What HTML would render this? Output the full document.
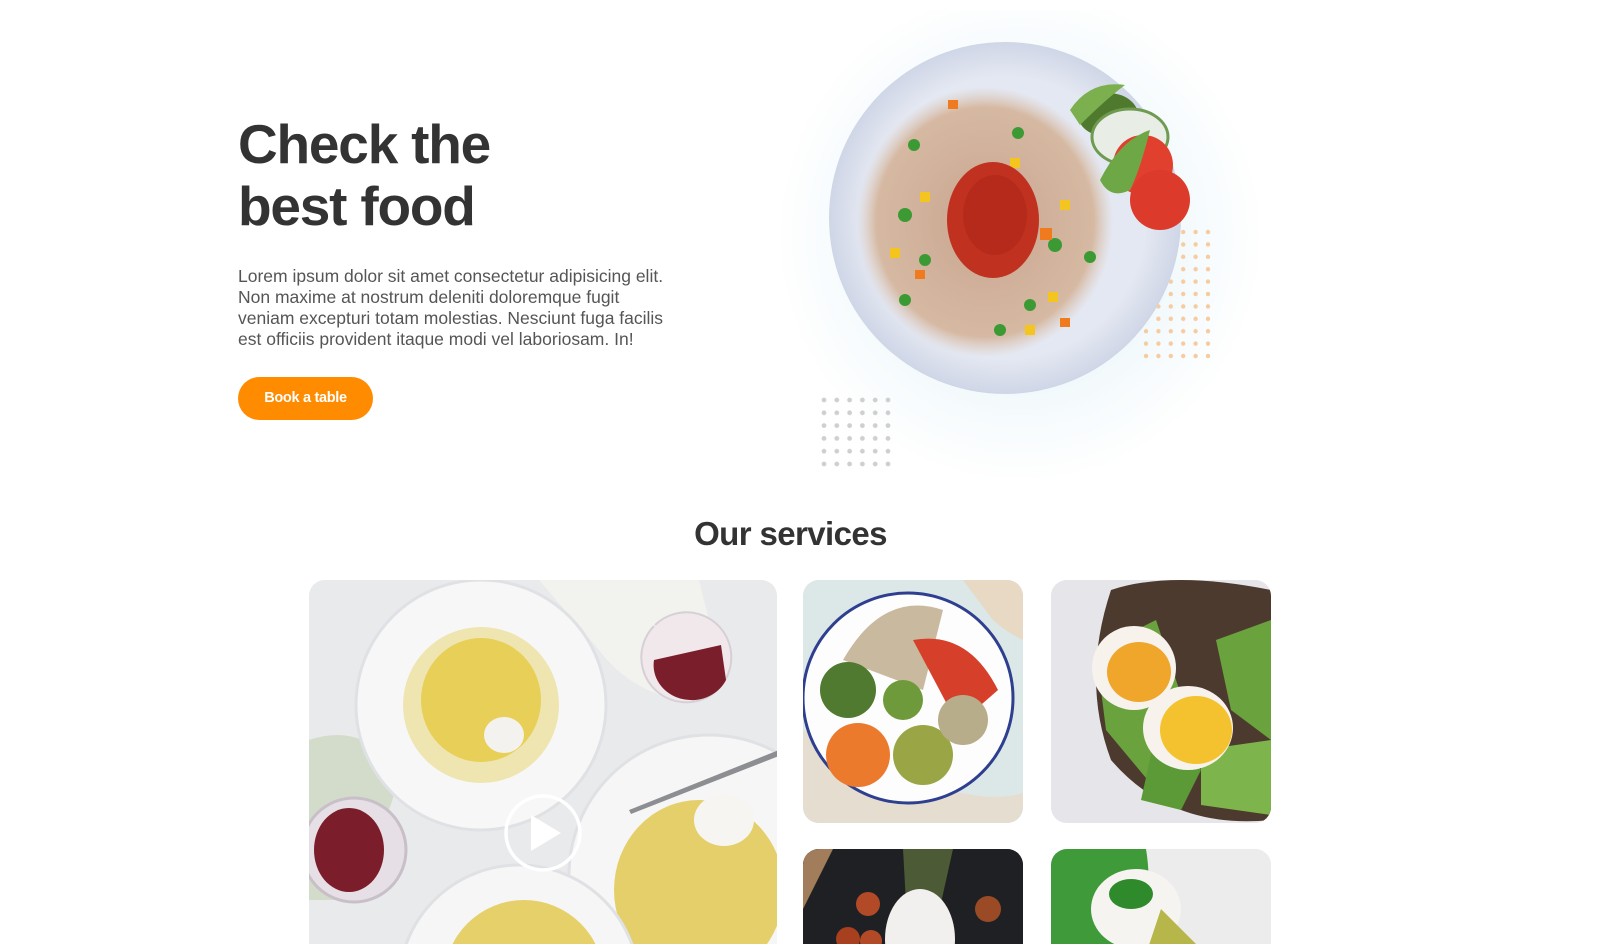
<!DOCTYPE html>
<html><head><meta charset="utf-8"><style>
*{margin:0;padding:0;box-sizing:border-box}
html,body{width:1601px;height:944px;overflow:hidden;background:#fff;font-family:"Liberation Sans",Arial,sans-serif;position:relative}
.abs{position:absolute}
h1{position:absolute;left:238px;top:113px;font-size:55px;line-height:62px;font-weight:700;color:#333;letter-spacing:-1.2px}
p.lead{position:absolute;left:238px;top:266px;width:470px;font-size:17.5px;line-height:21px;color:#555;white-space:nowrap}
.btn{position:absolute;left:238px;top:377px;width:135px;height:43px;border-radius:22px;background:#ff8c00;color:#fff;font-weight:700;font-size:14.5px;line-height:43px;text-align:center;letter-spacing:-0.3px}
h2{position:absolute;left:-10px;width:1601px;text-align:center;top:515px;font-size:33px;font-weight:700;color:#333;letter-spacing:-0.6px}
.card{position:absolute;border-radius:16px;overflow:hidden}
.cut{border-radius:16px 16px 0 0}
svg{display:block}
</style></head><body>
<h1>Check the<br>best food</h1>
<p class="lead">Lorem ipsum dolor sit amet consectetur adipisicing elit.<br>Non maxime at nostrum deleniti doloremque fugit<br>veniam excepturi totam molestias. Nesciunt fuga facilis<br>est officiis provident itaque modi vel laboriosam. In!</p>
<div class="btn">Book a table</div>

<div class="abs" style="left:780px;top:10px;width:480px;height:470px;background:radial-gradient(ellipse at 50% 48%,#eaf6fb 0%,#f2f9fc 45%,rgba(255,255,255,0) 72%)"></div>
<svg class="abs" style="left:0;top:0" width="1601" height="500">
<defs>
<pattern id="od" x="1143" y="229" width="12.4" height="12.4" patternUnits="userSpaceOnUse"><circle cx="3" cy="3" r="2.2" fill="#f6cba0"/></pattern>
<pattern id="gd" x="821" y="397" width="12.8" height="12.8" patternUnits="userSpaceOnUse"><circle cx="3" cy="3" r="2.4" fill="#cfcfcf"/></pattern>
<radialGradient id="plate" cx="50%" cy="50%" r="50%"><stop offset="0.8" stop-color="#e4e8f2"/><stop offset="1" stop-color="#cfd6e6"/></radialGradient>
<radialGradient id="pasta" cx="50%" cy="50%" r="50%"><stop offset="0" stop-color="#c9a590"/><stop offset="0.85" stop-color="#d6b9a2"/><stop offset="1" stop-color="#dcc7b8" stop-opacity="0"/></radialGradient>
</defs>
<rect x="1143" y="229" width="68" height="130" fill="url(#od)"/>
<rect x="821" y="397" width="77" height="70" fill="url(#gd)"/>
<circle cx="1005" cy="218" r="176" fill="url(#plate)"/>
<ellipse cx="985" cy="222" rx="128" ry="135" fill="url(#pasta)"/>
<g fill="#3c9a34"><circle cx="914" cy="145" r="6"/><circle cx="905" cy="215" r="7"/><circle cx="925" cy="260" r="6"/><circle cx="1018" cy="133" r="6"/><circle cx="1055" cy="245" r="7"/><circle cx="905" cy="300" r="6"/><circle cx="1000" cy="330" r="6"/><circle cx="1030" cy="305" r="6"/><circle cx="1090" cy="257" r="6"/></g>
<g fill="#f4c51f"><rect x="920" y="192" width="10" height="10"/><rect x="1010" y="158" width="10" height="10"/><rect x="1060" y="200" width="10" height="10"/><rect x="890" y="248" width="10" height="10"/><rect x="1048" y="292" width="10" height="10"/><rect x="1025" y="325" width="10" height="10"/></g>
<g fill="#f07a1e"><rect x="948" y="100" width="10" height="9"/><rect x="1040" y="228" width="12" height="12"/><rect x="915" y="270" width="10" height="9"/><rect x="1060" y="318" width="10" height="9"/></g>
<ellipse cx="993" cy="220" rx="46" ry="58" fill="#c0321f"/>
<ellipse cx="995" cy="215" rx="32" ry="40" fill="#b52a1b"/>
<ellipse cx="1108" cy="115" rx="30" ry="22" fill="#4f7a2e"/>
<ellipse cx="1130" cy="137" rx="38" ry="28" fill="#e8ede6" stroke="#6f9a50" stroke-width="3"/>
<circle cx="1143" cy="165" r="30" fill="#e2402f"/>
<circle cx="1160" cy="200" r="30" fill="#dc3a2a"/>
<path d="M1100 180 q20 -40 50 -50 q-10 40 -20 60 q-20 10 -30 -10z" fill="#6ea846"/>
<path d="M1070 110 q20 -30 55 -25 q-20 15 -45 40z" fill="#7cb04e"/>
</svg>

<h2>Our services</h2>

<div class="card cut" style="left:309px;top:580px;width:468px;height:364px;background:#ececee">
<svg width="468" height="364">
<rect width="468" height="380" fill="#e9eaec"/>
<path d="M0 160 q60 -20 90 40 l-40 120 l-50 0z" fill="#d3dccb"/>
<path d="M230 0 l60 70 q30 40 80 50 l40 -40 l-20 -80z" fill="#f2f2ee"/>
<circle cx="172" cy="125" r="125" fill="#f7f7f7" stroke="#dfe1e4" stroke-width="3"/>
<circle cx="172" cy="125" r="78" fill="#efe5b0"/>
<ellipse cx="172" cy="120" rx="60" ry="62" fill="#e8cf57"/>
<ellipse cx="195" cy="155" rx="20" ry="18" fill="#f4f2ee"/>
<path d="M346 45 a45 45 0 1 1 -1 1" fill="#f1e8ec" stroke="#d6d0d6" stroke-width="2"/>
<path d="M345 80 a38 35 0 0 0 72 20 l-5 -35z" fill="#7a1e2c"/>
<circle cx="400" cy="295" r="140" fill="#f6f6f6" stroke="#dfe1e4" stroke-width="3"/>
<ellipse cx="390" cy="310" rx="85" ry="90" fill="#e4cf6a"/>
<ellipse cx="415" cy="240" rx="30" ry="26" fill="#f7f5f1"/>
<path d="M320 230 l150 -60 l0 6 l-148 58z" fill="#8d8e92"/>
<circle cx="210" cy="405" r="120" fill="#f6f6f6" stroke="#dfe1e4" stroke-width="3"/>
<ellipse cx="215" cy="400" rx="80" ry="80" fill="#e5d06a"/>
<circle cx="45" cy="270" r="52" fill="#e6e0e6" stroke="#c8bfc8" stroke-width="3"/>
<ellipse cx="40" cy="270" rx="35" ry="42" fill="#7b1d2a"/>
<circle cx="234" cy="253" r="37" fill="none" stroke="#fff" stroke-width="3.5"/>
<path d="M222 235 l30 18 l-30 18z" fill="#fff"/>
</svg></div>

<div class="card" style="left:803px;top:580px;width:220px;height:243px;background:#dfe8e6">
<svg width="220" height="243">
<rect width="220" height="243" fill="#dce7e7"/>
<path d="M0 150 l0 93 l220 0 l0 -30 q-60 20 -220 -63z" fill="#e4ddd0"/>
<path d="M160 0 l60 0 l0 60 q-20 -10 -30 -20z" fill="#e8d9c4"/>
<circle cx="105" cy="118" r="105" fill="#fdfdfd" stroke="#2f3f8f" stroke-width="3"/>
<path d="M40 80 q40 -70 100 -50 l-20 80z" fill="#c9b99e"/>
<circle cx="45" cy="110" r="28" fill="#4f7a2f"/>
<circle cx="55" cy="175" r="32" fill="#ec7a2c"/>
<path d="M110 60 q55 -10 85 50 l-40 35z" fill="#d6402a"/>
<circle cx="120" cy="175" r="30" fill="#9aa646"/>
<circle cx="160" cy="140" r="25" fill="#b8ad8a"/>
<circle cx="100" cy="120" r="20" fill="#6f9a3c"/>
</svg></div>

<div class="card" style="left:1051px;top:580px;width:220px;height:243px;background:#e7e6ea">
<svg width="220" height="243">
<rect width="220" height="243" fill="#e6e5ea"/>
<path d="M60 10 q60 -20 160 0 l0 230 q-100 10 -160 -60 q-30 -80 0 -170z" fill="#4d3a2e"/>
<path d="M45 70 l60 -30 l30 90 l-30 80 l-50 -60z" fill="#6aa23e"/>
<path d="M110 130 l40 60 l-20 40 l-40 -10z" fill="#5b9a36"/>
<path d="M150 170 l70 -10 l0 75 l-70 -10z" fill="#7eb44c"/>
<path d="M165 60 l55 -20 l0 120 l-40 -30z" fill="#6aa23e"/>
<ellipse cx="83" cy="88" rx="42" ry="42" fill="#f7f3ec"/>
<ellipse cx="88" cy="92" rx="32" ry="30" fill="#efa62b"/>
<ellipse cx="137" cy="148" rx="45" ry="42" fill="#f7f3ec"/>
<ellipse cx="145" cy="150" rx="36" ry="34" fill="#f4c22e"/>
</svg></div>

<div class="card cut" style="left:803px;top:849px;width:220px;height:95px;background:#1e1f22">
<svg width="220" height="95">
<rect width="220" height="150" fill="#1f2023"/>
<path d="M0 0 l30 0 l-30 60z" fill="#a27d5c"/>
<path d="M100 0 l50 0 l-20 90 l-25 0z" fill="#4c5a36"/>
<ellipse cx="117" cy="90" rx="35" ry="50" fill="#f2f0ee"/>
<circle cx="65" cy="55" r="12" fill="#b24a28"/><circle cx="45" cy="90" r="12" fill="#a8401f"/><circle cx="68" cy="92" r="11" fill="#b24a28"/><circle cx="185" cy="60" r="13" fill="#9a4a24"/>
</svg></div>

<div class="card cut" style="left:1051px;top:849px;width:220px;height:95px;background:#ebebeb">
<svg width="220" height="95">
<rect width="220" height="150" fill="#ececec"/>
<path d="M0 0 l95 0 q10 60 -20 100 l-75 0z" fill="#3f9a3a"/>
<ellipse cx="85" cy="60" rx="45" ry="40" fill="#f6f4f0"/>
<ellipse cx="80" cy="45" rx="22" ry="15" fill="#2f8a2c"/>
<path d="M110 60 q20 20 40 40 l-20 40 l-40 -20z" fill="#b7b64a"/>
</svg></div>
</body></html>
